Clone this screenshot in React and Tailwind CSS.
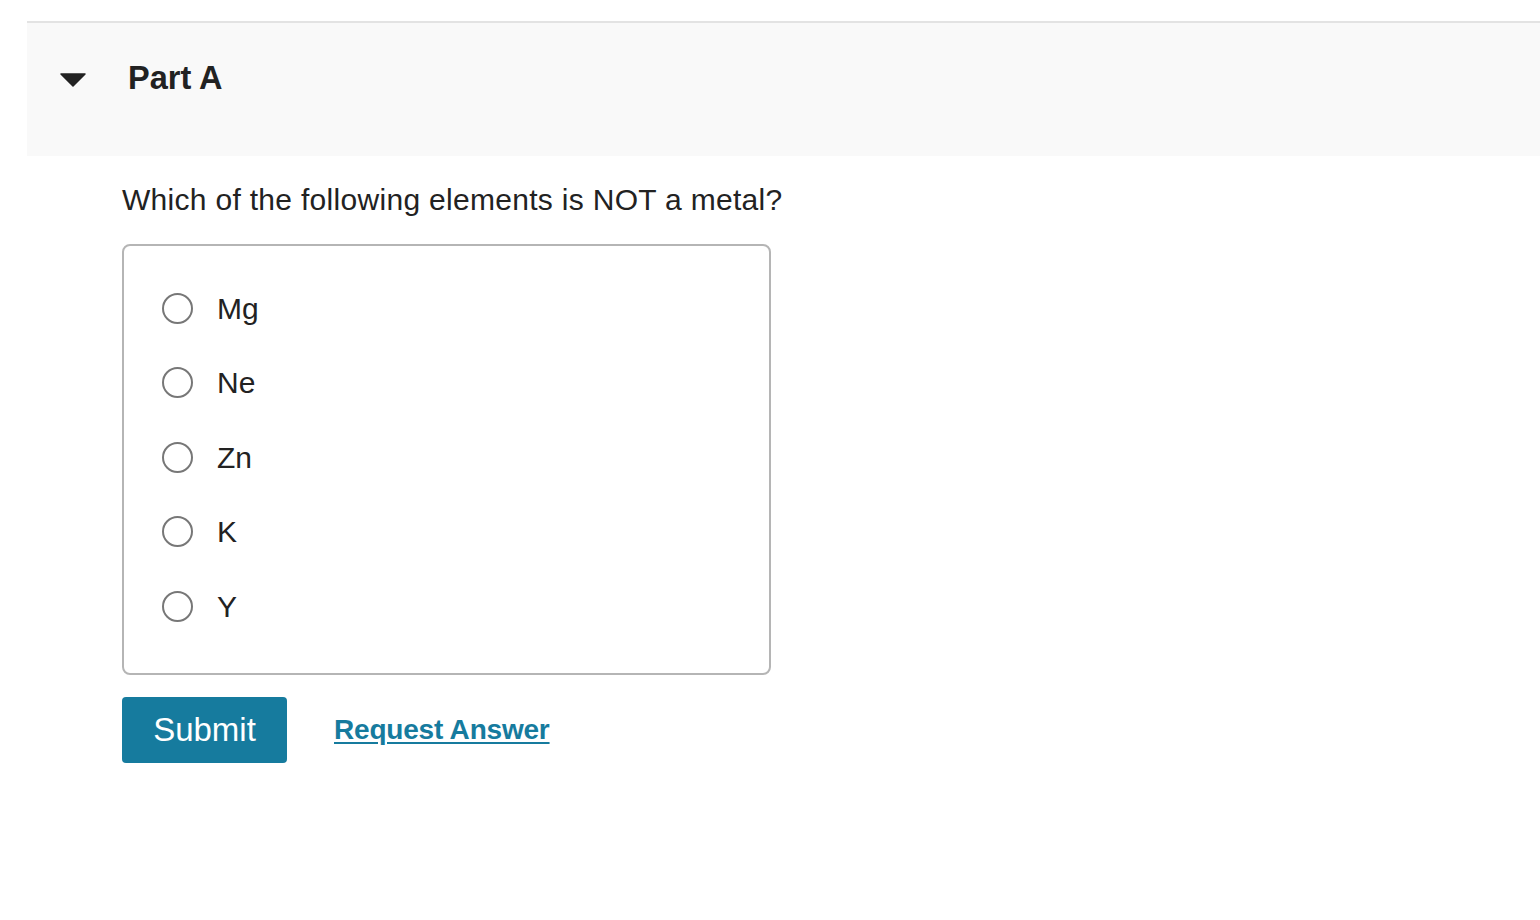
export default function App() {
  const options = ['Mg', 'Ne', 'Zn', 'K', 'Y'];
  return (
    <div className="min-h-[920px] w-[1540px] bg-white pt-[21px] font-['Liberation_Sans',Arial,sans-serif] text-[#222]">
      <div className="ml-[27px] border-t-2 border-[#e3e3e3] bg-[#f9f9f9]">
        <div className="flex h-[133px] items-center pl-[33px] pb-[22px]">
          <svg width="26" height="14" viewBox="0 0 26 14" className="mt-[2px]">
            <path d="M1 1 L25 1 L13 13 Z" fill="#222" stroke="#222" strokeWidth="1.5" strokeLinejoin="round" />
          </svg>
          <h2 className="ml-[42px] text-[32.5px] font-bold text-[#222]">Part A</h2>
        </div>
      </div>
      <div className="pl-[122px]">
        <p className="mt-[26px] text-[30px] leading-[36px] tracking-[0.3px] text-[#222]">
          Which of the following elements is NOT a metal?
        </p>
        <div className="mt-[26px] w-[649px] rounded-[8px] border-2 border-[#b5b5b5] px-[38px] pt-[25px] pb-[29px]">
          {options.map((o) => (
            <label key={o} className="flex h-[74.5px] items-center">
              <span className="h-[31px] w-[31px] rounded-full border-2 border-[#777] bg-white" />
              <span className="ml-[24px] text-[30px] text-[#222]">{o}</span>
            </label>
          ))}
        </div>
        <div className="mt-[22px] flex items-center">
          <button className="h-[66px] w-[165px] rounded-[4px] bg-[#167b9e] text-[33px] text-white">
            Submit
          </button>
          <a href="#" className="ml-[47px] text-[28px] font-bold tracking-[-0.2px] text-[#167b9e] underline underline-offset-[3px]">
            Request Answer
          </a>
        </div>
      </div>
    </div>
  );
}
